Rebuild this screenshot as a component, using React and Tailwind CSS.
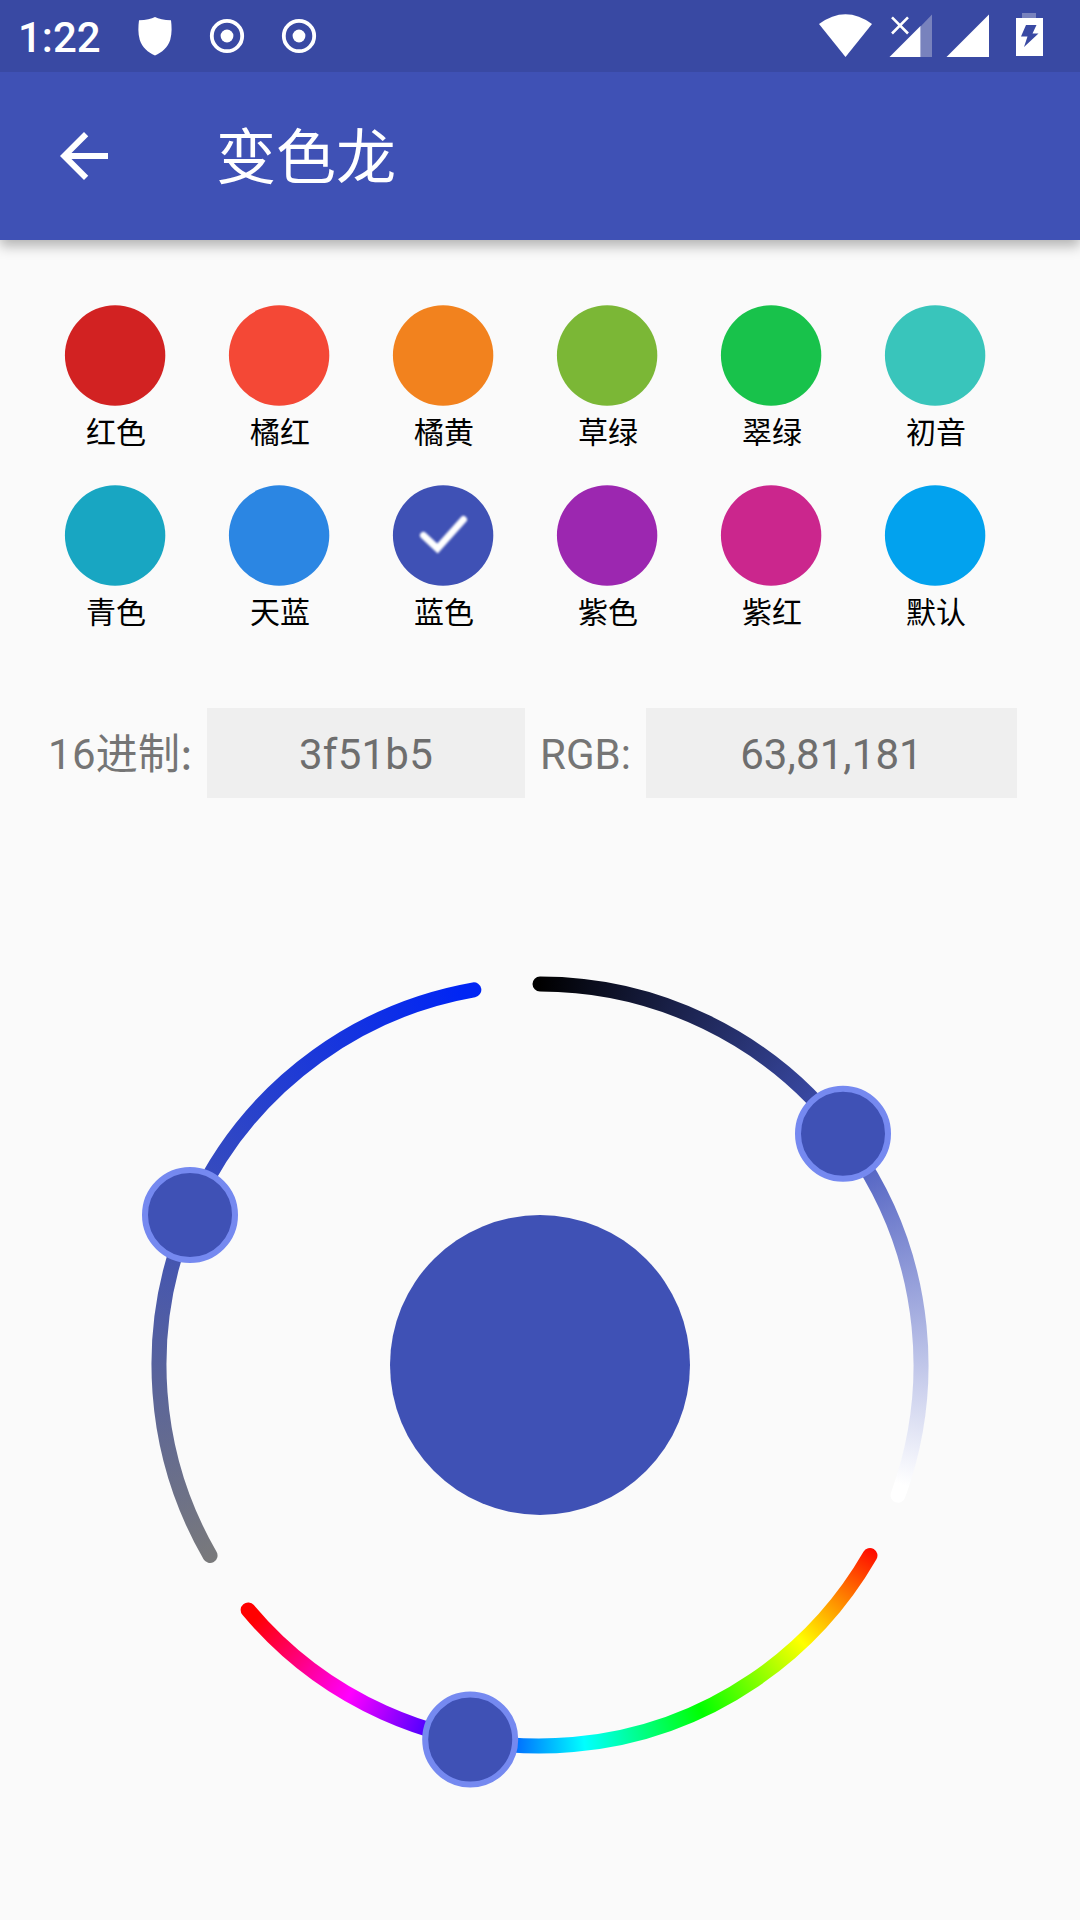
const SWATCHES = [
  { name: "红色", color: "#d22222" },
  { name: "橘红", color: "#f44836" },
  { name: "橘黄", color: "#f2821e" },
  { name: "草绿", color: "#7bb736" },
  { name: "翠绿", color: "#18c24b" },
  { name: "初音", color: "#39c5bb" },
  { name: "青色", color: "#18a6c2" },
  { name: "天蓝", color: "#2b86e3" },
  { name: "蓝色", color: "#3f51b5", selected: true },
  { name: "紫色", color: "#9c27b0" },
  { name: "紫红", color: "#cb268d" },
  { name: "默认", color: "#02a2ee" },
];

function TargetIcon() {
  return (
    <svg className="size-9" viewBox="0 0 36 36">
      <circle cx="18" cy="18" r="15.2" fill="none" stroke="#fff" strokeWidth="3.8" />
      <circle cx="18" cy="18" r="6.4" fill="#fff" />
    </svg>
  );
}

function StatusBar() {
  return (
    <div className="relative z-10 flex h-[72px] items-center justify-between bg-[#3949a3] pl-[18px] pr-9 text-white">
      <div className="flex h-full items-center">
        <span className="w-[118px] pt-[4px] text-[42px] leading-[72px] font-medium">1:22</span>
        <svg className="h-10 w-[38px]" viewBox="0 0 38 40">
          <path
            fill="#fff"
            d="M19 1 C15.500 3 10 4.200 3 4.200 C2.300 10 1.800 17 3.800 24 C6 31 12 36.500 19 39.600 C26 36.500 32 31 34.200 24 C36.200 17 35.700 10 35 4.200 C28 4.200 22.500 3 19 1 Z"
          />
        </svg>
        <div className="ml-[35px] flex gap-9">
          <TargetIcon />
          <TargetIcon />
        </div>
      </div>
      <svg className="h-[72px] w-[228px]" viewBox="816 0 228 72">
        <path fill="#fff" d="M845.500 57 L819 24 Q845.500 4.500 872 24 Z" />
        <path fill="#7882bd" d="M920.500 26.500 L932 14.500 V57 H920.500 Z" />
        <path fill="#fff" d="M889.500 57 L920.500 26 V57 Z" />
        <path stroke="#fff" strokeWidth="2.6" fill="none" d="M892 17.300 L908 33.500 M908 17.300 L892 33.500" />
        <path fill="#fff" d="M946.500 57 L989 14.500 V57 Z" />
        <path fill="#7882bd" d="M1022 13 H1036 V18 H1022 Z" />
        <path
          fill="#fff"
          fillRule="evenodd"
          d="M1016 18 H1043 V56 H1016 Z M1026 25 L1021 36.500 H1027.500 L1024 47 L1038.500 33.500 H1032.500 L1036.500 25 Z"
        />
      </svg>
    </div>
  );
}

function AppBar() {
  return (
    <header className="flex h-[168px] items-center bg-[#3f51b5] pl-12 text-white shadow-[0_6px_12px_rgba(0,0,0,0.29)]">
      <svg className="size-[72px]" viewBox="0 0 24 24" fill="#fff">
        <path d="M20 11H7.830l5.590-5.590L12 4l-8 8 8 8 1.410-1.410L7.830 13H20v-2z" />
      </svg>
      <h1 className="ml-24 pt-[5px] text-[60px] leading-[84px] font-normal">变色龙</h1>
    </header>
  );
}

function Swatch({ name, color, selected }) {
  return (
    <div className="flex h-[180px] flex-col items-center">
      <svg className="h-[101px] w-[100px] overflow-visible" viewBox="0 0 100 101">
        <circle cx="50.1" cy="50.500" r="50.200" fill={color} />
        {selected && (
          <path
            className="blur-[0.9px]"
            d="M30.500 50.500 L44.500 63.500 L70.500 34.500"
            fill="none"
            stroke="#fff"
            strokeWidth="7"
            strokeLinecap="round"
          />
        )}
      </svg>
      <span className="mt-[5px] pl-[2px] text-[30px] leading-[44px] text-black">{name}</span>
    </div>
  );
}

const CX = 540;
const CY = 1365;
const R = 381;

function arcPath(from, to) {
  const point = (deg) => {
    const a = (deg * Math.PI) / 180;
    return `${CX + R * Math.sin(a)} ${CY - R * Math.cos(a)}`;
  };
  return `M${point(from)} A${R} ${R} 0 0 1 ${point(to)}`;
}

const ARCS = [
  [0, 110],
  [120, 230],
  [240, 350],
];

const KNOBS = [
  [843, 1133.700],
  [470.200, 1739.500],
  [190, 1215],
];

function ColorWheel() {
  return (
    <svg className="h-[1080px] w-full" viewBox="0 840 1080 1080">
      <mask id="tracks" maskUnits="userSpaceOnUse" x="140" y="965" width="800" height="800">
        {ARCS.map(([from, to]) => (
          <path key={from} d={arcPath(from, to)} fill="none" stroke="#fff" strokeWidth="15" strokeLinecap="round" />
        ))}
      </mask>
      <g mask="url(#tracks)">
        <foreignObject x="140" y="965" width="800" height="800">
          <div className="size-[800px] bg-[conic-gradient(#000_0deg,#4254bd_53.3deg,#fff_108.3deg,#fff_115deg,#f00_115deg,#f00_118.3deg,#ff0_136.6deg,#0f0_155deg,#0ff_173.3deg,#00f_191.6deg,#f0f_210deg,#f00_228.3deg,#f00_235deg,#7a7a7a_235deg,#7a7a7a_238.3deg,#3d50b7_293.2deg,#0025f4_348.3deg,#0025f4_355deg,#000_355deg)]" />
        </foreignObject>
      </g>
      <circle cx={CX} cy={CY} r="150" fill="#3f51b5" />
      {KNOBS.map(([x, y]) => (
        <circle key={x} cx={x} cy={y} r="45" fill="#3f51b5" stroke="#7589f0" strokeWidth="6" />
      ))}
    </svg>
  );
}

export default function App() {
  return (
    <div className="flex h-[1920px] w-[1080px] flex-col overflow-hidden bg-[#fafafa] font-[Roboto,'Noto_Sans_CJK_SC',sans-serif]">
      <StatusBar />
      <AppBar />
      <div className="grid grid-cols-6 pt-[65px] pl-[33px] pr-[63px]">
        {SWATCHES.map((s) => (
          <Swatch key={s.name} {...s} />
        ))}
      </div>
      <div className="mt-[43px] flex h-[90px] pl-12 text-[42px] leading-[94px] whitespace-nowrap text-[#757575]">
        <span className="w-[159px] tracking-[0.3px]">
          16进制<span className="font-['Noto_Sans_CJK_SC',sans-serif] leading-none">:</span>
        </span>
        <div className="h-full w-[318px] bg-[#efefef] text-center tracking-[0.25px] text-[#6e6e6e]">3f51b5</div>
        <span className="ml-[15px] w-[106px]">RGB:</span>
        <div className="h-full w-[371px] bg-[#efefef] text-center tracking-[0.1px] text-[#6e6e6e]">63,81,181</div>
      </div>
      <div className="mt-[42px]">
        <ColorWheel />
      </div>
    </div>
  );
}
